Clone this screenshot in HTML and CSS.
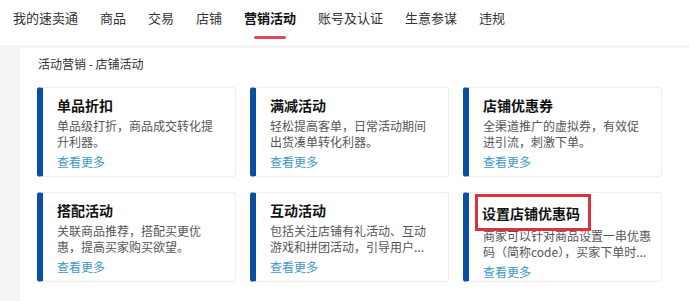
FILE: index.html
```html
<!DOCTYPE html>
<html lang="zh-CN">
<head>
    <meta charset="UTF-8">
    <meta name="viewport" content="width=device-width, initial-scale=1.0">
    <title>营销活动 - 店铺活动</title>
    <link rel="stylesheet" href="styles.css">
</head>
<body>
    <nav class="topnav">
        <a>我的速卖通</a>
        <a>商品</a>
        <a>交易</a>
        <a>店铺</a>
        <a class="active">营销活动</a>
        <a>账号及认证</a>
        <a>生意参谋</a>
        <a>违规</a>
    </nav>

    <div class="panel">
        <div class="crumb">活动营销 - 店铺活动</div>
        <div class="cards">
            <div class="card">
                <h4>单品折扣</h4>
                <p>单品级打折，商品成交转化提升利器。</p>
                <a class="more">查看更多</a>
            </div>
            <div class="card">
                <h4>满减活动</h4>
                <p>轻松提高客单，日常活动期间出货凑单转化利器。</p>
                <a class="more">查看更多</a>
            </div>
            <div class="card">
                <h4>店铺优惠券</h4>
                <p>全渠道推广的虚拟券，有效促进引流，刺激下单。</p>
                <a class="more">查看更多</a>
            </div>
            <div class="card">
                <h4>搭配活动</h4>
                <p>关联商品推荐，搭配买更优惠，提高买家购买欲望。</p>
                <a class="more">查看更多</a>
            </div>
            <div class="card">
                <h4>互动活动</h4>
                <p>包括关注店铺有礼活动、互动游戏和拼团活动，引导用户...</p>
                <a class="more">查看更多</a>
            </div>
            <div class="card">
                <h4 class="mark">设置店铺优惠码</h4>
                <p class="wide">商家可以针对商品设置一串优惠码（简称code），买家下单时...</p>
                <a class="more">查看更多</a>
            </div>
        </div>
    </div>
</body>
</html>
```

FILE: styles.css
```css
body { margin: 0; background: #f3f4f6; font-family: "Noto Sans CJK SC", "Noto Sans", sans-serif; color: #333; }

.topnav { height: 45px; background: #fff; display: flex; gap: 22px; padding-left: 13px; font-size: 13px; }
.topnav a { line-height: 35px; color: #333; position: relative; }
.topnav a.active { color: #111; font-weight: bold; }
.topnav a.active::after { content: ""; position: absolute; left: 10px; right: 10px; top: 36px; height: 3px; border-radius: 2px; background: #e5475c; }

.panel { margin: 3px 0 0 20px; background: #fff; padding: 8px 0 20px 17px; height: 240px; }
.crumb { font-size: 12px; line-height: 16px; margin-left: 1px; color: #333; }

.cards { display: grid; grid-template-columns: repeat(3, 199px); gap: 15px 14px; margin-top: 15px; }
.card { position: relative; height: 90px; border: 1px solid #eeeeee; border-left: 6px solid #0b4fa2; border-radius: 3px; padding: 7px 14px 0 14px; box-sizing: border-box; }
.card h4 { margin: 0; font-size: 14px; line-height: 20px; color: #111; }
.card p { margin: 3px 0 0; font-size: 12px; line-height: 16px; color: #555; width: 160px; height: 32px; }
.card p.wide { width: 172px; }
.card .more { display: block; margin-top: 2px; font-size: 12px; line-height: 20px; color: #3f97c2; }

/* red annotation box round the last card's title */
.card h4.mark { display: inline-block; position: relative; z-index: 1; margin: -11px 0 -6px -8px; padding: 6px 8px 5px 4px; border: 3px solid #d9343d; background: #fff; }
```
